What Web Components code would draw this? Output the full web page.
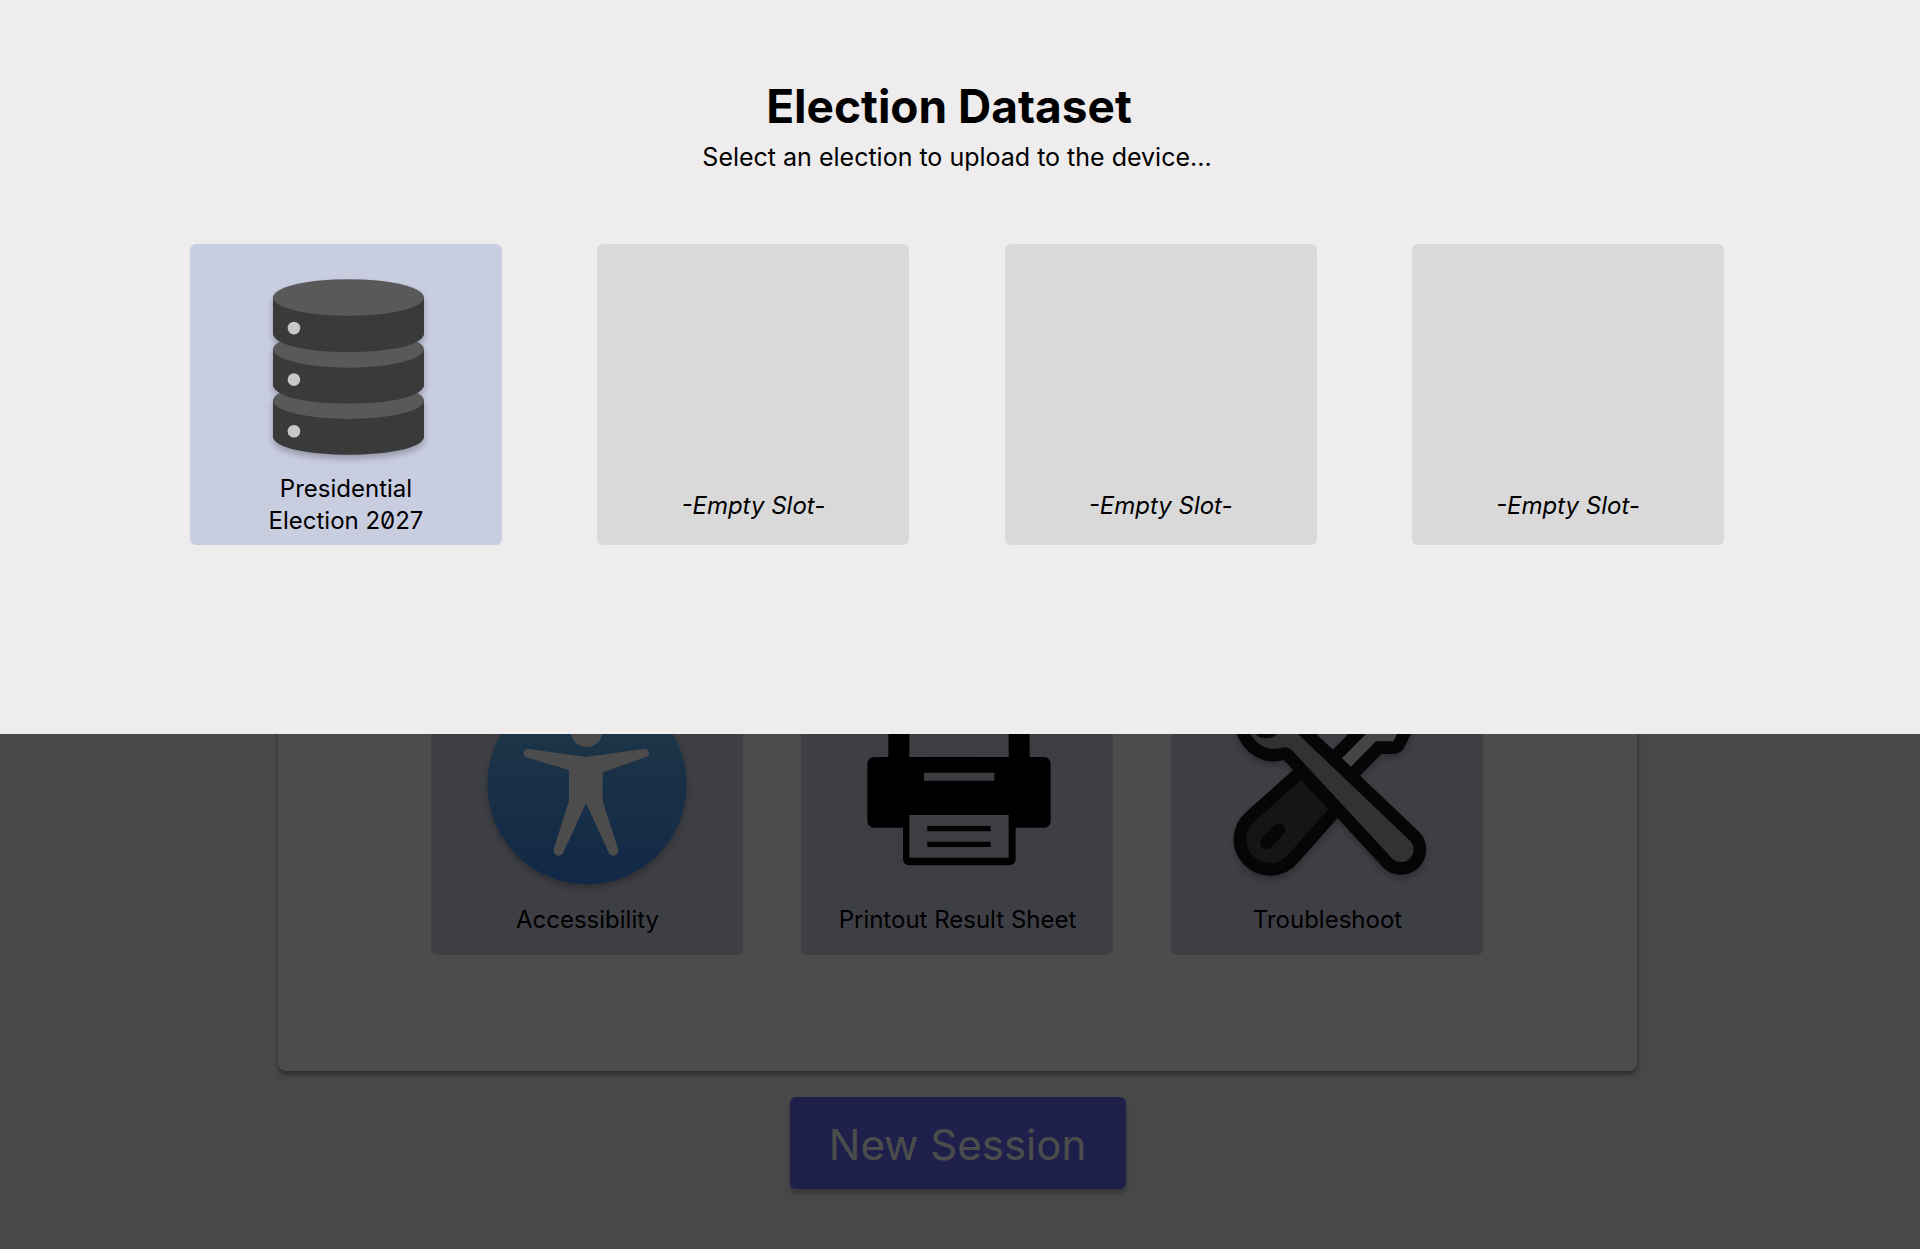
<!DOCTYPE html>
<html lang="en">
<head>
<meta charset="utf-8">
<meta name="viewport" content="width=device-width, initial-scale=1">
<title>Election Dataset</title>
<style>
    body {
        margin: 0;
        font-family: Inter, "Noto Sans", sans-serif;
        color: #000;
        background: #f0f0f0;
    }
</style>
</head>
<body>
<voting-app></voting-app>

<script>
const icons = {
    database: `
        <svg width="156" height="176" viewBox="264 145 469 528">
            <g id="stack">
                <path fill="#3a3a3a" d="M279 510V622C290 655 390 673 506 673S722 655 733 622V510Z"/>
                <ellipse fill="#595959" cx="506" cy="510" rx="227" ry="55"/>
                <path fill="#3a3a3a" d="M279 356V466C290 501 390 519 506 519S722 501 733 466V356Z"/>
                <ellipse fill="#595959" cx="506" cy="356" rx="227" ry="55"/>
                <path fill="#3a3a3a" d="M279 200V312C290 346 390 364 506 364S722 346 733 312V200Z"/>
                <ellipse fill="#595959" cx="506" cy="200" rx="227" ry="55"/>
            </g>
            <g fill="#c8c8c8">
                <circle cx="342" cy="292" r="19"/>
                <circle cx="342" cy="447" r="19"/>
                <circle cx="342" cy="602" r="19"/>
            </g>
        </svg>`,
    accessibility: `
        <svg width="200" height="200" viewBox="201 -105 600 600">
            <defs>
                <linearGradient id="sky" x1="0" y1="0" x2="0" y2="1">
                    <stop offset="0" stop-color="#6cbcee"/>
                    <stop offset="1" stop-color="#3c88ee"/>
                </linearGradient>
            </defs>
            <circle cx="501" cy="194" r="299" fill="url(#sky)"/>
            <circle cx="500" cy="33" r="48" fill="#fff"/>
            <path fill="#fff" d="M326 87 498 111 669 87C691 86 691 106 680 110L548 157V244L594 386C600 405 576 415 567 400L498 249 429 400C418 415 395 405 402 384L447 244V150L318 112C305 104 310 87 326 87Z"/>
        </svg>`,
    printer: `
        <svg class="flat" width="200" height="200" viewBox="201 -105 600 600">
            <defs>
                <pattern id="hatch" width="16" height="16" patternUnits="userSpaceOnUse" patternTransform="rotate(45)">
                    <rect width="8" height="16" fill="#000" opacity=".04"/>
                </pattern>
            </defs>
            <rect x="232" y="-72" width="550" height="550" fill="url(#hatch)"/>
            <path fill-rule="evenodd" d="M252 111H295V-50H719V111H762A20 20 0 0 1 782 131V303A20 20 0 0 1 762 323H677V418A18 18 0 0 1 659 436H357A18 18 0 0 1 339 418V323H252A20 20 0 0 1 232 303V131A20 20 0 0 1 252 111Z
                M358 -10V111H656V-10Z M402 158V182H613V158Z M358 285V413H656V285Z"/>
            <path d="M412 318H602V334H412Z M412 365H602V381H412Z"/>
        </svg>`,
    tools: `
        <svg width="200" height="200" viewBox="201 -105 600 600">
            <g stroke="#141414" stroke-width="76" stroke-linejoin="round" paint-order="stroke">
                <path fill="#e6e6e6" d="M546 115 650 10 720 -30 733 -4 700 64H648L572 141Z"/>
                <path fill="#494949" d="M423 180 285 303A71 71 0 1 0 384 404L505 268Z"/>
                <path fill="#a7a7a7" d="M262 20C280 75 325 95 365 83Q385 77 400 95L696 415A37 37 0 0 0 750 362L417 45 400 -20 340 -20 318 20Z"/>
            </g>
            <ellipse cx="318" cy="30" rx="36" ry="25" fill="#141414"/>
            <path d="M319 368 356 330" fill="none" stroke="#141414" stroke-width="39" stroke-linecap="round"/>
        </svg>`
};

class TileCard extends HTMLElement {
    constructor() {
        super();
        this.attachShadow({ mode: 'open' });
    }

    connectedCallback() {
        this.shadowRoot.innerHTML = `
            <style>
                :host {
                    display: block;
                    width: 312px;
                }
                button {
                    display: flex;
                    flex-direction: column;
                    align-items: center;
                    justify-content: flex-end;
                    gap: 19px;
                    box-sizing: border-box;
                    width: 100%;
                    height: 301px;
                    padding: 0 0 19px;
                    border: 0;
                    border-radius: 6px;
                    background: #d0d3e6;
                    color: #000;
                    font: 24px/32px Inter, "Noto Sans", sans-serif;
                    font-feature-settings: "zero";
                    cursor: pointer;
                }
                :host([kind="dataset"]) button {
                    gap: 18px;
                    padding-bottom: 8px;
                    background: #c8cde0;
                }
                :host([kind="empty"]) button {
                    padding-bottom: 23px;
                    background: #d9d9d9;
                    font-style: italic;
                }
                svg {
                    display: block;
                    filter: drop-shadow(0 4px 3px rgba(0, 0, 0, 0.25));
                }
                svg.flat {
                    filter: none;
                }
            </style>
            <button type="button">
                ${icons[this.getAttribute('icon')] || ''}
                <span><slot></slot></span>
            </button>
        `;
    }
}

class SessionButton extends HTMLElement {
    constructor() {
        super();
        this.attachShadow({ mode: 'open' });
        this.shadowRoot.innerHTML = `
            <style>
                :host {
                    display: block;
                }
                button {
                    width: 336px;
                    height: 92px;
                    padding: 4px 0 0;
                    border: 0;
                    border-radius: 6px;
                    background: #676af7;
                    color: #fff;
                    font: 42px/52px Inter, "Noto Sans", sans-serif;
                    box-shadow: 0 4px 4px rgba(0, 0, 0, 0.25);
                    cursor: pointer;
                }
            </style>
            <button type="button"><slot></slot></button>
        `;
    }
}

class AdminDashboard extends HTMLElement {
    constructor() {
        super();
        this.attachShadow({ mode: 'open' });
        this.shadowRoot.innerHTML = `
            <style>
                :host {
                    display: flex;
                    flex-direction: column;
                    align-items: center;
                    gap: 26px;
                    box-sizing: border-box;
                    min-height: 100vh;
                    padding: 120px 5px 60px 0;
                }
                .panel {
                    display: flex;
                    justify-content: center;
                    gap: 58px;
                    box-sizing: border-box;
                    width: 71%;
                    padding: 534px 0 116px;
                    border-radius: 8px;
                    background: #fff;
                    box-shadow: 0 4px 4px rgba(0, 0, 0, 0.35);
                }
            </style>
            <main class="panel">
                <tile-card icon="accessibility">Accessibility</tile-card>
                <tile-card icon="printer">Printout Result Sheet</tile-card>
                <tile-card icon="tools">Troubleshoot</tile-card>
            </main>
            <session-button>New Session</session-button>
        `;
    }
}

class DatasetSheet extends HTMLElement {
    constructor() {
        super();
        this.attachShadow({ mode: 'open' });
        this.shadowRoot.innerHTML = `
            <style>
                :host {
                    display: block;
                    padding: 76px 196px 189px 190px;
                    background: #eeecec;
                }
                header {
                    text-align: center;
                }
                h1 {
                    margin: 0;
                    padding-right: 16px;
                    font-size: 46px;
                    line-height: 60px;
                    font-weight: 700;
                }
                p {
                    margin: 0;
                    font-size: 25px;
                    line-height: 42px;
                }
                .slots {
                    display: flex;
                    justify-content: space-between;
                    margin-top: 66px;
                }
            </style>
            <header>
                <h1>Election Dataset</h1>
                <p>Select an election to upload to the device...</p>
            </header>
            <div class="slots">
                <tile-card kind="dataset" icon="database">Presidential<br>Election 2027</tile-card>
                <tile-card kind="empty">-Empty Slot-</tile-card>
                <tile-card kind="empty">-Empty Slot-</tile-card>
                <tile-card kind="empty">-Empty Slot-</tile-card>
            </div>
        `;
    }
}

class VotingApp extends HTMLElement {
    constructor() {
        super();
        this.attachShadow({ mode: 'open' });
        this.shadowRoot.innerHTML = `
            <style>
                :host {
                    display: block;
                    position: relative;
                }
                .scrim {
                    position: absolute;
                    inset: 0;
                    background: rgba(0, 0, 0, 0.7);
                }
            </style>
            <admin-dashboard></admin-dashboard>
            <div class="scrim">
                <dataset-sheet role="dialog" aria-label="Election Dataset"></dataset-sheet>
            </div>
        `;
    }
}

customElements.define('tile-card', TileCard);
customElements.define('session-button', SessionButton);
customElements.define('admin-dashboard', AdminDashboard);
customElements.define('dataset-sheet', DatasetSheet);
customElements.define('voting-app', VotingApp);
</script>
</body>
</html>
